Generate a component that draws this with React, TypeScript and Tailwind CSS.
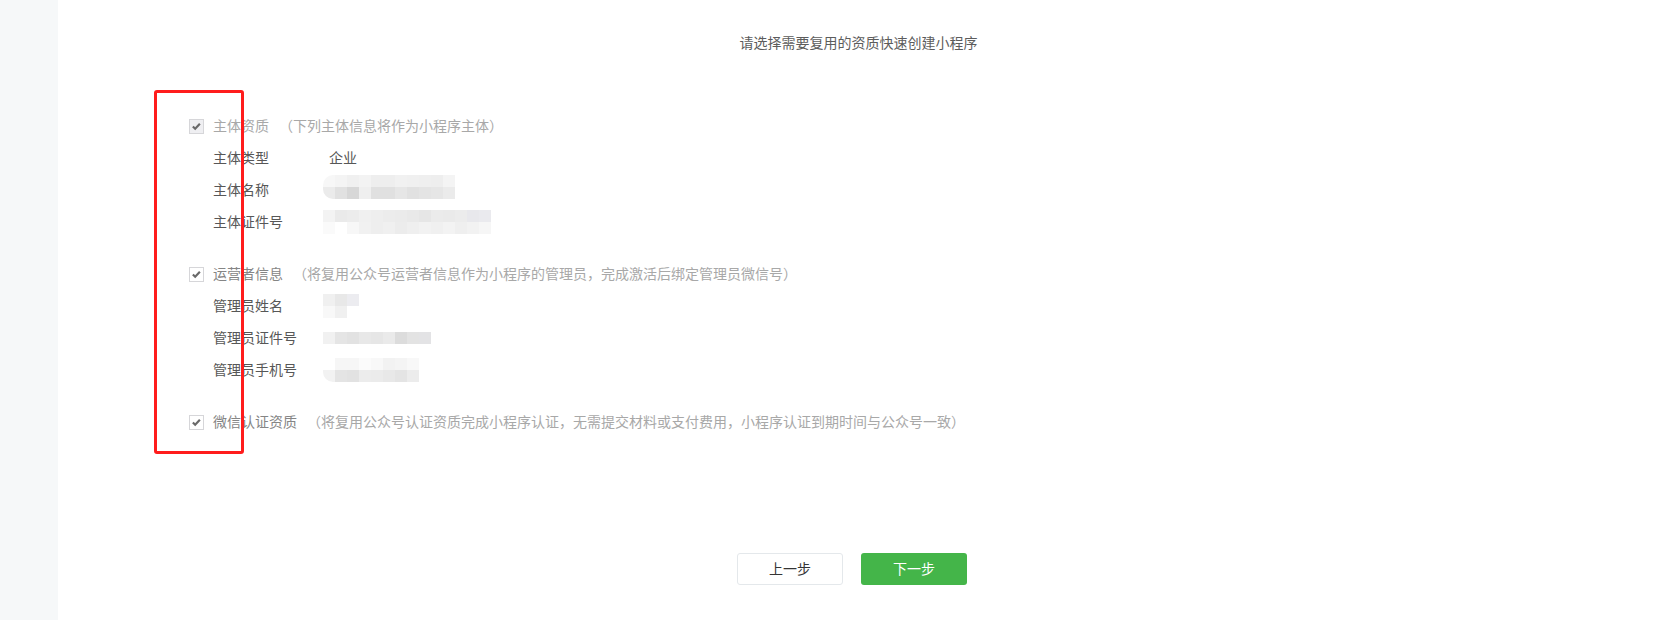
import React from "react";

type Row = string[];

const nameMosaic: Row[] = [
  ["bg-[#f7f7f7]", "bg-[#f4f4f4]", "bg-[#f0f0f0]", "bg-[#f3f3f3]", "bg-[#eeeeee]", "bg-[#eeeeee]", "bg-[#f1f1f1]", "bg-[#f0f0f0]", "bg-[#efefef]", "bg-[#eeeeee]", "bg-[#f4f4f4]"],
  ["bg-[#ebebeb]", "bg-[#e1e1e1]", "bg-[#d7d7d7]", "bg-[#efefef]", "bg-[#e0e0e0]", "bg-[#e0e0e0]", "bg-[#e6e6e6]", "bg-[#e1e1e1]", "bg-[#e4e4e4]", "bg-[#e6e6e6]", "bg-[#ebebeb]"],
];

const licenseMosaic: Row[] = [
  ["bg-[#f3f3f3]", "bg-[#eaeaea]", "bg-[#ececec]", "bg-[#f0f0f0]", "bg-[#eeeeee]", "bg-[#ececec]", "bg-[#ebebeb]", "bg-[#e9e9e9]", "bg-[#e6e6e6]", "bg-[#ebebeb]", "bg-[#eaeaea]", "bg-[#ececec]", "bg-[#e8e8ec]", "bg-[#eaeaee]"],
  ["bg-[#fafafa]", "bg-[#ffffff]", "bg-[#f7f7f7]", "bg-[#f1f1f1]", "bg-[#eeeeee]", "bg-[#f0f0f0]", "bg-[#ececec]", "bg-[#efefef]", "bg-[#f2f2f2]", "bg-[#f0f0f0]", "bg-[#f3f3f3]", "bg-[#efefef]", "bg-[#f2f2f2]", "bg-[#f6f6f6]"],
];

const adminNameMosaic: Row[] = [
  ["bg-[#f0f0f0]", "bg-[#e8e8e8]", "bg-[#ececf0]"],
  ["bg-[#f8f8f8]", "bg-[#f0f0f0]", "bg-white"],
];

const adminIdMosaic: Row[] = [
  ["bg-[#f1f1f1]", "bg-[#e5e5e5]", "bg-[#e2e2e2]", "bg-[#e8e8e8]", "bg-[#e6e6e6]", "bg-[#eaeaea]", "bg-[#dcdcdc]", "bg-[#e3e3e3]", "bg-[#e3e3e5]"],
];

const adminPhoneMosaic: Row[] = [
  ["bg-white", "bg-[#f6f6f6]", "bg-[#f6f6f6]", "bg-[#fbfbfb]", "bg-[#f8f8f8]", "bg-[#f2f2f2]", "bg-[#f4f4f4]", "bg-[#f8f8f8]"],
  ["bg-[#f2f2f2]", "bg-[#e4e4e4]", "bg-[#e2e2e2]", "bg-[#ececec]", "bg-[#ebebeb]", "bg-[#e8e8e8]", "bg-[#e4e4e4]", "bg-[#ececec]"],
];

// blurred-out value, drawn as a pixel mosaic
function Mosaic({ rows, rounded }: { rows: Row[]; rounded?: boolean }) {
  return (
    <div className={`flex flex-col overflow-hidden ${rounded ? "rounded-l-[10px]" : ""}`}>
      {rows.map((row, i) => (
        <div key={i} className="flex">
          {row.map((c, j) => (
            <div key={j} className={`h-[12px] w-[12px] ${c}`} />
          ))}
        </div>
      ))}
    </div>
  );
}

function CheckBox({ filled }: { filled?: boolean }) {
  return (
    <span
      className={`flex h-[15px] w-[15px] items-center justify-center border border-[#d6d6d9] ${
        filled ? "bg-[#efeff2]" : "bg-white"
      }`}
    >
      <svg viewBox="0 0 15 15" className="h-[15px] w-[15px]">
        <path d="M3.3 7.4 L6 10.1 L11.4 4.4" fill="none" stroke="#696969" strokeWidth="2.5" />
      </svg>
    </span>
  );
}

function Header({ label, desc, filled, light }: { label: string; desc: string; filled?: boolean; light?: boolean }) {
  return (
    <div className="flex h-8 items-center">
      <CheckBox filled={filled} />
      <span className={`ml-[9px] ${light ? "text-[#a8a8a8]" : "text-[#858585]"}`}>{label}</span>
      <span className="ml-[10px] text-[#a8a8a8]">{desc}</span>
    </div>
  );
}

function Field({ label, children }: { label: string; children: React.ReactNode }) {
  return (
    <div className="flex h-8 items-center pl-6">
      <span className="w-[110px] text-[#575757]">{label}</span>
      <div className="flex items-center">{children}</div>
    </div>
  );
}

export default function App() {
  return (
    <div className="relative flex h-[620px] w-full bg-white font-['Liberation_Sans','Noto_Sans_CJK_SC',sans-serif] text-[14px]">
      <aside className="h-full w-[58px] shrink-0 bg-[#f6f8f9]" />
      <main className="flex flex-1 flex-col">
        <h2 className="pt-[33px] pl-[3px] text-center leading-5 text-[#5c5c5c]">请选择需要复用的资质快速创建小程序</h2>

        <div className="ml-[131px] mt-[57px] flex flex-col">
          <section className="flex flex-col">
            <Header label="主体资质" desc="（下列主体信息将作为小程序主体）" filled light />
            <Field label="主体类型">
              <span className="pl-[6px] text-[#575757]">企业</span>
            </Field>
            <Field label="主体名称">
              <div className="-translate-y-[3px]">
                <Mosaic rows={nameMosaic} rounded />
              </div>
            </Field>
            <Field label="主体证件号">
              <Mosaic rows={licenseMosaic} />
            </Field>
          </section>

          <section className="mt-5 flex flex-col">
            <Header label="运营者信息" desc="（将复用公众号运营者信息作为小程序的管理员，完成激活后绑定管理员微信号）" />
            <Field label="管理员姓名">
              <Mosaic rows={adminNameMosaic} />
            </Field>
            <Field label="管理员证件号">
              <Mosaic rows={adminIdMosaic} />
            </Field>
            <Field label="管理员手机号">
              <Mosaic rows={adminPhoneMosaic} rounded />
            </Field>
          </section>

          <section className="mt-5 flex flex-col">
            <Header label="微信认证资质" desc="（将复用公众号认证资质完成小程序认证，无需提交材料或支付费用，小程序认证到期时间与公众号一致）" />
          </section>
        </div>

        <div className="mt-[115px] mr-[10px] flex justify-center gap-[18px]">
          <button className="h-8 w-[106px] rounded-[3px] border border-[#e4e8eb] bg-white text-[#353535]">上一步</button>
          <button className="h-8 w-[106px] rounded-[3px] bg-[#44b549] text-white">下一步</button>
        </div>
      </main>

      {/* red annotation frame */}
      <div className="pointer-events-none absolute left-[154px] top-[90px] h-[364px] w-[90px] rounded-[3px] border-[3px] border-[#ff1c1c]" />
    </div>
  );
}
